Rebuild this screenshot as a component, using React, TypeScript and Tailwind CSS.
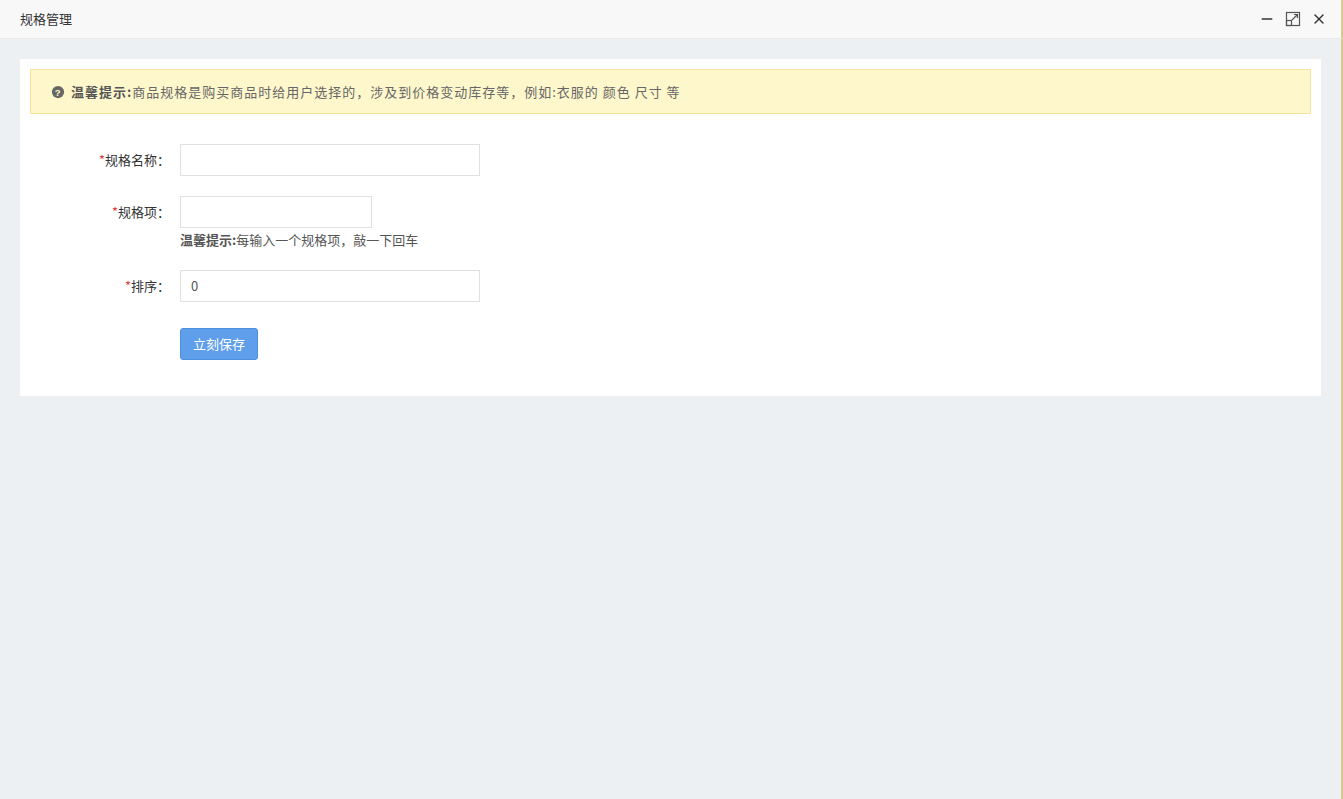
import { X, Minus } from "lucide-react";

const font = { fontFamily: '"Noto Sans CJK SC", "Liberation Sans", sans-serif' };

const Field = ({ label, children }: { label: string; children: React.ReactNode }) => (
  <div className="flex items-start">
    <label className="w-[150px] shrink-0 pr-[10px] text-right text-[13px] leading-[32px] text-[#333]">
      <span className="text-[#e4393c]">*</span>
      {label}：
    </label>
    <div>{children}</div>
  </div>
);

export default function App() {
  return (
    <div className="flex h-[799px] w-[1343px] flex-col bg-[#edf0f3]" style={font}>
      <div className="flex h-[39px] shrink-0 items-center justify-between border-b border-[#e8e8e8] border-r-2 border-r-[#d9c98f] bg-[#f8f8f8] pl-[20px] pr-[14px]">
        <span className="text-[13px] text-[#333]">规格管理</span>
        <div className="flex items-center gap-[10px] text-[#333]">
          <Minus size={16} strokeWidth={2.5} />
          <svg width="16" height="16" viewBox="0 0 16 16" fill="none" stroke="#555" strokeWidth="1.2">
            <rect x="1.5" y="1.5" width="13" height="13" />
            <rect x="1.5" y="9.5" width="5" height="5" />
            <path d="M7 9 L12.5 3.5 M9 3.5 H12.5 V7" />
          </svg>
          <X size={16} strokeWidth={2} />
        </div>
      </div>
      <div className="flex-1 border-r-2 border-r-[#d9c98f] px-[20px] pt-[20px]">
        <div className="bg-white p-[10px] pb-[36px]">
          <div className="flex h-[45px] items-center gap-[6px] border border-[#f7e3a0] bg-[#fef7cc] pl-[20px] text-[13px] tracking-[1px] text-[#666]">
            <svg width="14" height="14" viewBox="0 0 16 16">
              <circle cx="8" cy="8" r="7" fill="#666" />
              <text x="8" y="12" textAnchor="middle" fontSize="11" fontWeight="bold" fill="#fef7cc" fontFamily="Liberation Sans">?</text>
            </svg>
            <span>
              <b className="text-[#555]">温馨提示:</b>商品规格是购买商品时给用户选择的，涉及到价格变动库存等，例如:衣服的 颜色 尺寸 等
            </span>
          </div>
          <div className="mt-[30px] flex flex-col gap-[20px]">
            <Field label="规格名称">
              <input className="h-[32px] w-[300px] border border-[#e0e0e0] px-[10px] text-[13px] outline-none" />
            </Field>
            <Field label="规格项">
              <input className="h-[32px] w-[192px] border border-[#e0e0e0] px-[10px] text-[13px] outline-none" />
              <div className="mt-[2px] text-[13px] text-[#555]">
                <b>温馨提示:</b>每输入一个规格项，敲一下回车
              </div>
            </Field>
            <Field label="排序">
              <input defaultValue="0" className="h-[32px] w-[300px] border border-[#e0e0e0] px-[10px] text-[13px] text-[#555] outline-none" />
            </Field>
            <div className="mt-[6px] pl-[150px]">
              <button className="h-[32px] w-[78px] rounded-[3px] border border-[#4a8fe0] bg-[#5f9eea] text-[13px] text-white">
                立刻保存
              </button>
            </div>
          </div>
        </div>
      </div>
    </div>
  );
}
